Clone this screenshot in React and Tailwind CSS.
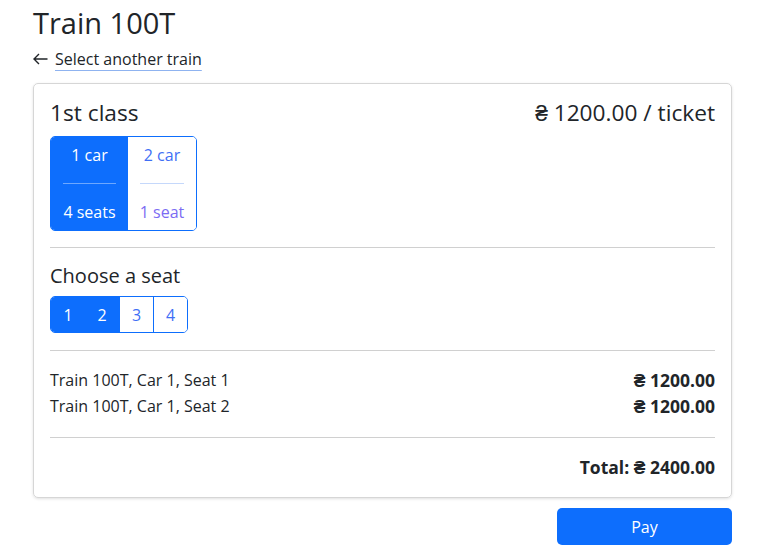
import { useState } from "react";

const cars = [
  { car: 1, seats: 4 },
  { car: 2, seats: 1 },
];

export default function App() {
  const [activeCar, setActiveCar] = useState(1);
  const [picked, setPicked] = useState([1, 2]);

  const toggleSeat = (n) =>
    setPicked((p) => (p.includes(n) ? p.filter((x) => x !== n) : [...p, n].sort()));

  return (
    <div className="pl-[33px] pr-[31px] pt-[5px] font-['Open_Sans',sans-serif] text-[#212529] bg-white min-h-[555px]">
      <h1 className="text-[29px] leading-[36px] font-normal">Train 100T</h1>

      {/* Back link */}
      <div className="mt-[6px] flex items-center gap-[7px] text-[16px] leading-[24px]">
        <svg width="15" height="12" viewBox="0 0 15 12" fill="none" stroke="#212529" strokeWidth="1.4">
          <path d="M14.5 6H1.2M6 1L1 6l5 5" />
        </svg>
        <a href="#" className="underline decoration-[#8fb3f0] underline-offset-[5px] decoration-1">
          Select another train
        </a>
      </div>

      <div className="mt-[12px] border border-[#d6d6d6] rounded-[5px] shadow-[0_1px_3px_rgba(0,0,0,0.12)] px-[16px] pt-[14px] pb-[18px]">
        <div className="flex justify-between items-center">
          <div className="text-[22.7px] leading-[30px]">1st class</div>
          <div className="text-[22.7px] leading-[30px]">₴ 1200.00 / ticket</div>
        </div>

        {/* Car picker */}
        <div className="mt-[8px] inline-flex border border-[#0d6efd] rounded-[5px] overflow-hidden">
          {cars.map((c) => {
            const on = c.car === activeCar;
            return (
              <button
                key={c.car}
                onClick={() => setActiveCar(c.car)}
                className={`flex flex-col items-center px-[12px] pt-[6px] pb-[6px] text-[16px] leading-[24px] whitespace-nowrap ${
                  on ? "bg-[#0d6efd] text-white w-[77px]" : "bg-white text-[#3f6ff5] w-[68px]"
                }`}
              >
                <span>{c.car} car</span>
                <span className={`mt-[16px] mb-[16px] h-px w-full ${on ? "bg-[#6ea8fe]" : "bg-[#c5d8fb]"}`} />
                <span className={on ? "" : "text-[#7b6cf3]"}>
                  {c.seats} {c.seats === 1 ? "seat" : "seats"}
                </span>
              </button>
            );
          })}
        </div>

        <hr className="mt-[16px] border-[#d0d0d0]" />

        <div className="mt-[14px] text-[20px] leading-[28px]">Choose a seat</div>
        <div className="mt-[6px] inline-flex border border-[#0d6efd] rounded-[5px] overflow-hidden">
          {[1, 2, 3, 4].map((n, i) => {
            const on = picked.includes(n);
            return (
              <button
                key={n}
                onClick={() => toggleSeat(n)}
                className={`w-[34px] h-[35px] text-[16px] ${
                  on ? "bg-[#0d6efd] text-white" : "bg-white text-[#3f6ff5]"
                } ${i > 0 && !on ? "border-l border-[#0d6efd]" : ""}`}
              >
                {n}
              </button>
            );
          })}
        </div>

        <hr className="mt-[17px] border-[#d0d0d0]" />

        <div className="mt-[17px] flex flex-col gap-[2px] text-[16px] leading-[24px]">
          {picked.map((n) => (
            <div key={n} className="flex justify-between items-center">
              <span>Train 100T, Car {activeCar}, Seat {n}</span>
              <span className="font-bold text-[17.5px]">₴ 1200.00</span>
            </div>
          ))}
        </div>

        <hr className="mt-[19px] border-[#d0d0d0]" />

        <div className="mt-[17px] text-right font-bold text-[17.5px] leading-[24px]">
          Total: ₴ {(picked.length * 1200).toFixed(2)}
        </div>
      </div>

      <div className="mt-[10px] flex justify-end">
        <button className="w-[175px] h-[37px] bg-[#0d6efd] text-white text-[16px] rounded-[5px]">
          Pay
        </button>
      </div>
    </div>
  );
}
